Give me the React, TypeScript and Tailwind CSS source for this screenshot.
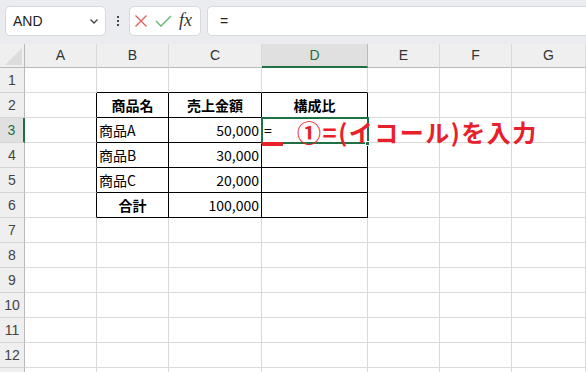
import React from 'react';

const cols = ['A', 'B', 'C', 'D', 'E', 'F', 'G'];
const rows = [1, 2, 3, 4, 5, 6, 7, 8, 9, 10, 11, 12, 13];

type Cell = { text?: string; align?: 'left' | 'right' | 'center'; bold?: boolean };

const data: Record<string, Cell> = {
  B2: { text: '商品名', align: 'center', bold: true },
  C2: { text: '売上金額', align: 'center', bold: true },
  D2: { text: '構成比', align: 'center', bold: true },
  B3: { text: '商品A' },
  C3: { text: '50,000', align: 'right' },
  D3: { text: '=' },
  B4: { text: '商品B' },
  C4: { text: '30,000', align: 'right' },
  B5: { text: '商品C' },
  C5: { text: '20,000', align: 'right' },
  B6: { text: '合計', align: 'center', bold: true },
  C6: { text: '100,000', align: 'right' },
};

const inTable = (c: string, r: number) => ['B', 'C', 'D'].includes(c) && r >= 2 && r <= 6;

// black border on right if this cell or the next one is inside the table
const rightBlack = (ci: number, r: number) =>
  inTable(cols[ci], r) || (ci + 1 < cols.length && inTable(cols[ci + 1], r));
const bottomBlack = (c: string, r: number) => inTable(c, r) || inTable(c, r + 1);

export default function App() {
  return (
    <div className="w-[586px] h-[372px] overflow-hidden bg-white relative" style={{ fontFamily: '"Noto Sans CJK JP", "Noto Sans", sans-serif' }}>
      {/* formula bar */}
      <div className="h-[44px] bg-[#eaecef] flex items-start pt-[6px] pl-[5px] gap-[6px]">
        <div className="w-[101px] h-[30px] bg-white rounded-[5px] border border-[#d6d8db] flex items-center justify-between pl-[7px] pr-[5px]">
          <span className="text-[14px] text-[#222] font-['Liberation_Sans',sans-serif]">AND</span>
          <svg width="12" height="12" viewBox="0 0 12 12"><path d="M2.5 4.5 6 8l3.5-3.5" fill="none" stroke="#444" strokeWidth="1.3" /></svg>
        </div>
        <div className="w-[11px] h-[30px] flex flex-col items-center justify-center gap-[2px]">
          <div className="w-[2px] h-[2px] bg-[#444]" />
          <div className="w-[2px] h-[2px] bg-[#444]" />
          <div className="w-[2px] h-[2px] bg-[#444]" />
        </div>
        <div className="w-[72px] h-[30px] bg-white rounded-[5px] border border-[#d6d8db] flex items-center pl-[4px] gap-[7px]">
          <svg width="14" height="14" viewBox="0 0 14 14"><path d="M1.5 1.5l11 11M12.5 1.5l-11 11" stroke="#e35d5d" strokeWidth="1.3" /></svg>
          <svg width="17" height="14" viewBox="0 0 17 14"><path d="M1 7l5 5L16 2" fill="none" stroke="#5fb56f" strokeWidth="1.3" /></svg>
          <span className="text-[18px] italic text-[#333] font-['Liberation_Serif',serif] leading-none pb-[2px]">fx</span>
        </div>
        <div className="flex-1 h-[30px] bg-white border-y border-l border-[#d6d8db] rounded-l-[5px] flex items-center pl-[12px]">
          <span className="text-[14px] text-[#222] font-['Liberation_Sans',sans-serif]">=</span>
        </div>
      </div>

      {/* grid */}
      <div className="grid grid-cols-[25px_72px_72px_93px_106px_72px_72px_74px] auto-rows-[25px] grid-rows-[24px] text-[14px] text-black">
        {/* header row */}
        <div className="bg-[#efefef] border-b border-r border-[#b9b9b9] relative">
          <svg className="absolute left-[5px] top-[4px]" width="17" height="17" viewBox="0 0 17 17"><path d="M17 0V17H0Z" fill="#dcdcdc" /></svg>
        </div>
        {cols.map((c) => (
          <div
            key={c}
            className={
              c === 'D'
                ? 'bg-[#e0e0e0] border-b-2 border-b-[#1e7145] border-r border-r-[#b9b9b9] flex items-center justify-center text-[14px] text-[#1e7145] font-["Liberation_Sans",sans-serif]'
                : 'bg-[#efefef] border-b border-b-[#b9b9b9] border-r border-r-[#dadada] flex items-center justify-center text-[14px] text-[#333] font-["Liberation_Sans",sans-serif]'
            }
          >
            {c}
          </div>
        ))}

        {rows.map((r) => (
          <React.Fragment key={r}>
            <div
              className={
                r === 3
                  ? 'bg-[#e0e0e0] border-b border-b-[#d4d4d4] border-r-2 border-r-[#1e7145] flex items-center justify-center text-[14px] text-[#1e7145] font-["Liberation_Sans",sans-serif]'
                  : 'bg-[#efefef] border-b border-b-[#d4d4d4] border-r border-r-[#b9b9b9] flex items-center justify-center text-[14px] text-[#444] font-["Liberation_Sans",sans-serif]'
              }
            >
              {r < 13 ? r : ''}
            </div>
            {cols.map((c, ci) => {
              const cell = data[c + r];
              const rb = rightBlack(ci, r) ? 'border-r-black' : 'border-r-[#dadada]';
              const bb = bottomBlack(c, r) ? 'border-b-black' : 'border-b-[#dadada]';
              const align =
                cell?.align === 'right' ? 'justify-end' : cell?.align === 'center' ? 'justify-center' : 'justify-start';
              return (
                <div key={c} className={`border-r border-b ${rb} ${bb} flex items-center px-[2px] ${align}`}>
                  {cell?.text && (
                    <span className={cell.bold ? 'font-bold' : ''}>{cell.text}</span>
                  )}
                </div>
              );
            })}
          </React.Fragment>
        ))}
      </div>

      {/* selected cell D3 */}
      <div className="absolute left-[261px] top-[117px] w-[108px] h-[27px] border-2 border-[#1e7145] pointer-events-none" />
      <div className="absolute left-[365px] top-[141px] w-[5px] h-[5px] bg-[#1e7145] border border-white" />
      <div className="absolute left-[262px] top-[142px] w-[21px] h-[4px] bg-[#e8202a] rounded-[1px]" />

      {/* annotation */}
      <div className="absolute left-[297px] top-[119px] text-[24px] tracking-[1.5px] font-bold text-[#e8202a] leading-[26px] whitespace-nowrap">
        ①=(イコール)を入力
      </div>
    </div>
  );
}
